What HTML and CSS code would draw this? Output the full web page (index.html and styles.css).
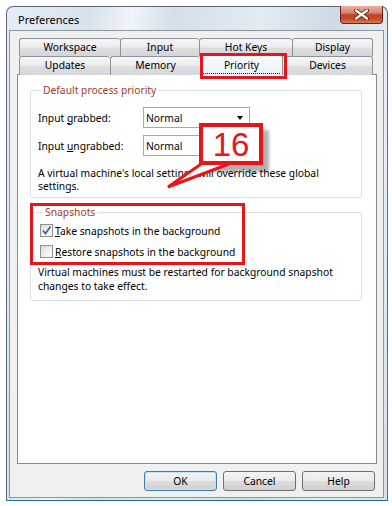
FILE: index.html
```html
<!DOCTYPE html>
<html lang="en">
<head>
    <meta charset="UTF-8">
    <meta name="viewport" content="width=device-width, initial-scale=1.0">
    <title>Preferences</title>
    <link rel="stylesheet" href="styles.css">
</head>
<body>
    <div class="window">
        <div class="titlebar">
            <span class="title">Preferences</span>
            <div class="close-btn">
                <svg width="15" height="11" viewBox="0 0 15 11">
                    <path d="M2 1.5 L13 9.5 M13 1.5 L2 9.5" stroke="#5a1a10" stroke-width="4" stroke-linecap="round"/>
                    <path d="M2 1.5 L13 9.5 M13 1.5 L2 9.5" stroke="#fff" stroke-width="2.2" stroke-linecap="round"/>
                </svg>
            </div>
        </div>

        <div class="client">
            <div class="tabs tabs-back">
                <div class="tab">Workspace</div>
                <div class="tab">Input</div>
                <div class="tab">Hot Keys</div>
                <div class="tab">Display</div>
            </div>
            <div class="tabs tabs-front">
                <div class="tab">Updates</div>
                <div class="tab">Memory</div>
                <div class="tab tab-active"><span class="focus">Priority</span></div>
                <div class="tab">Devices</div>
            </div>

            <div class="panel">
                <fieldset class="group">
                    <legend>Default process priority</legend>
                    <div class="field-row">
                        <label class="field-label">Input <u>g</u>rabbed:</label>
                        <div class="combo">Normal<span class="combo-arrow"></span></div>
                    </div>
                    <div class="field-row">
                        <label class="field-label">Input <u>u</u>ngrabbed:</label>
                        <div class="combo">Normal<span class="combo-arrow"></span></div>
                    </div>
                    <p class="note">A virtual machine's local settings will override these global settings.</p>
                </fieldset>

                <fieldset class="group group-snap">
                    <legend>Snapshots</legend>
                    <div class="check-row">
                        <span class="checkbox checked">
                            <svg width="11" height="11" viewBox="0 0 11 11">
                                <path d="M2 5.5 L4.5 8.5 L9.5 1.5" fill="none" stroke="#4a5f9c" stroke-width="1.7"/>
                            </svg>
                        </span>
                        <span><u>T</u>ake snapshots in the background</span>
                    </div>
                    <div class="check-row">
                        <span class="checkbox"></span>
                        <span><u>R</u>estore snapshots in the background</span>
                    </div>
                    <p class="note note-snap">Virtual machines must be restarted for background snapshot changes to take effect.</p>
                </fieldset>
            </div>

            <div class="buttons">
                <div class="btn btn-default">OK</div>
                <div class="btn">Cancel</div>
                <div class="btn">Help</div>
            </div>
        </div>
    </div>

    <!-- annotation drawn over the screenshot -->
    <svg class="annotations" width="392" height="506" viewBox="0 0 392 506">
        <defs>
            <filter id="soft" x="-20%" y="-20%" width="140%" height="140%">
                <feGaussianBlur stdDeviation="1.5"/>
            </filter>
        </defs>
        <rect x="201.5" y="54.5" width="84" height="23" fill="none" stroke="#e8141b" stroke-width="3"/>
        <rect x="31.5" y="204.5" width="212" height="59" fill="none" stroke="#e8141b" stroke-width="3"/>
        <rect x="206" y="130" width="63" height="42" fill="#000" opacity="0.3" filter="url(#soft)"/>
        <polygon points="168,187 204,162 234,162" fill="#fff" stroke="#e8141b" stroke-width="3" stroke-linejoin="miter"/>
        <rect x="201" y="125" width="60" height="38" fill="#fff" stroke="#e8141b" stroke-width="4"/>
        <text x="231" y="156" text-anchor="middle" class="badge-num">16</text>
    </svg>
</body>
</html>
```

FILE: styles.css
```css
body {
    margin: 0;
    background: #fff;
    font-family: "Noto Sans", sans-serif;
    font-size: 10.3px;
    color: #000;
    position: relative;
    width: 392px;
    height: 506px;
    overflow: hidden;
}
.window {
    margin: 6px 0 0 6px;
    width: 382px;
    height: 495px;
    box-sizing: border-box;
    border: 1px solid #5d6873;
    border-bottom-color: #2b6b8c;
    border-radius: 7px 7px 0 0;
    background: linear-gradient(100deg, #e6edf4 0%, #d7e2ec 18%, #f0f4f8 27%, #d4dfea 36%, #e3ebf2 55%, #cddae6 70%, #e8eef5 85%, #d6e1ec 100%);
    padding: 0 3px 2px 2px;
    display: flex;
    flex-direction: column;
}
.titlebar {
    height: 23px;
    display: flex;
    align-items: center;
}
.title {
    padding-left: 9px;
    font-size: 11px;
    padding-top: 2px;
}
.close-btn {
    margin-left: auto;
    margin-right: 1px;
    align-self: flex-start;
    margin-top: -1px;
    width: 43px;
    height: 18px;
    box-sizing: border-box;
    border: 1px solid #6e2217;
    border-top: none;
    border-radius: 0 0 4px 4px;
    background: linear-gradient(#eab0a2 0%, #d98570 40%, #c3402a 52%, #c9502f 80%, #de7c55 100%);
    display: flex;
    align-items: center;
    justify-content: center;
}
.client {
    flex: 1;
    background: #f0f0f0;
    border: 1px solid #8c96a0;
    padding: 7px 0 0 7px;
    display: flex;
    flex-direction: column;
}
.tabs {
    display: grid;
    margin-left: 2px;
    height: 18px;
}
.tabs-back {
    grid-template-columns: 101px 79px 93px 81px;
}
.tabs-front {
    grid-template-columns: 91px 90px 83px 90px;
    position: relative;
    z-index: 2;
}
.tab {
    border: 1px solid #8e9197;
    border-bottom: none;
    border-right: none;
    border-radius: 3px 3px 0 0;
    background: linear-gradient(#f6f6f6 0%, #ececec 45%, #dedede 55%, #d4d6da 100%);
    text-align: center;
    line-height: 17px;
    box-sizing: border-box;
}
.tab:last-child {
    border-right: 1px solid #8e9197;
}
.tab-active {
    background: linear-gradient(#f9fbfd, #eaf1f9);
    margin-top: -1px;
    height: 20px;
    border-right: 1px solid #8e9197;
    line-height: 16px;
    padding: 1px 2px 0;
}
.tab-active + .tab {
    border-left: none;
}
.focus {
    display: block;
    border-bottom: 1px dotted #222;
}
.panel {
    width: 360px;
    height: 390px;
    box-sizing: border-box;
    border: 1px solid #898c95;
    background: #fff;
    padding: 7px 0 0 12px;
}
.group {
    margin: 0;
    width: 332px;
    box-sizing: border-box;
    border: 1px solid #d5dfe5;
    border-radius: 3px;
    padding: 9px 6px 4px 7px;
}
.group legend {
    color: #a33b2a;
    padding: 0 2px;
    margin-left: 3px;
    line-height: 16px;
}
.field-row {
    display: flex;
    align-items: center;
    height: 21px;
    margin-bottom: 7px;
}
.field-row + .field-row {
    margin-bottom: 0;
}
.field-label {
    width: 105px;
}
.combo {
    width: 107px;
    height: 21px;
    box-sizing: border-box;
    border: 1px solid #a3a9b1;
    padding-left: 2px;
    line-height: 18px;
    display: flex;
    align-items: center;
}
.combo-arrow {
    margin-left: auto;
    margin-right: 6px;
    width: 0;
    height: 0;
    border-left: 3.5px solid transparent;
    border-right: 3.5px solid transparent;
    border-top: 4px solid #000;
}
.note {
    margin: 11px 0 0;
    line-height: 13px;
    padding-right: 20px;
}
.group-snap {
    margin-top: 6px;
    padding: 0 6px 7px 9px;
}
.check-row {
    display: flex;
    align-items: center;
    height: 21px;
    gap: 2px;
}
.checkbox {
    width: 13px;
    height: 13px;
    box-sizing: border-box;
    border: 1px solid #8f8f8f;
    background: linear-gradient(135deg, #dcdcdc, #f6f6f6 70%, #fff);
    display: flex;
    align-items: center;
    justify-content: center;
}
.note-snap {
    margin-top: 3px;
    margin-left: -2px;
    line-height: 14px;
}
.buttons {
    display: flex;
    justify-content: flex-end;
    gap: 6px;
    margin-top: 7px;
    margin-right: 8px;
}
.btn {
    width: 73px;
    height: 20px;
    box-sizing: border-box;
    border: 1px solid #707070;
    border-radius: 3px;
    background: linear-gradient(#f3f3f3 0%, #ebebeb 48%, #dddddd 52%, #cfcfcf 100%);
    text-align: center;
    line-height: 18px;
}
.btn-default {
    border-color: #3c7fb1;
    box-shadow: inset 0 0 0 1px #bfe4f6;
}
.annotations {
    position: absolute;
    top: 0;
    left: 0;
    z-index: 10;
    pointer-events: none;
}
.badge-num {
    font-family: "Liberation Sans", Arial, sans-serif;
    font-size: 33px;
    fill: #e8141b;
}
```
